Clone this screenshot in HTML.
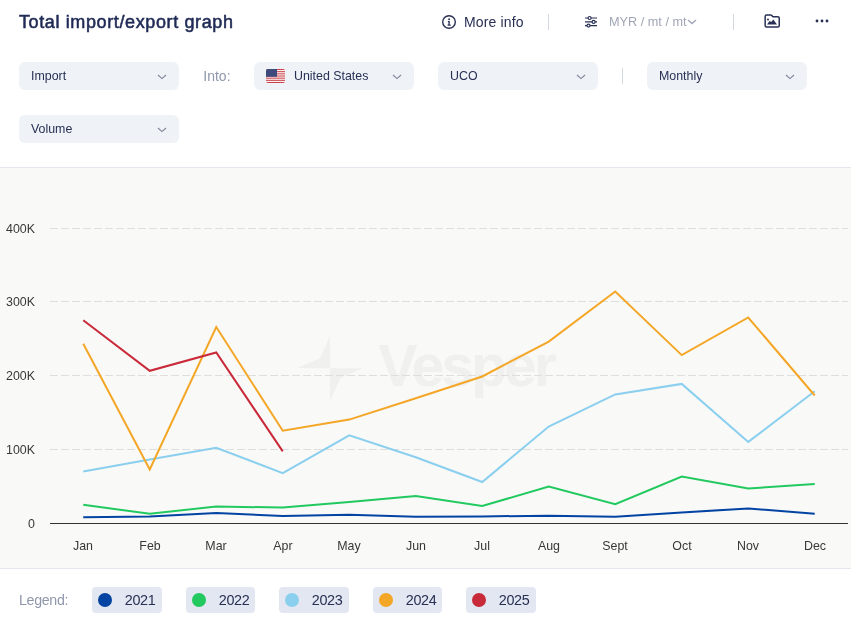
<!DOCTYPE html>
<html><head><meta charset="utf-8">
<style>
*{margin:0;padding:0;box-sizing:border-box}
body{will-change:transform}html,body{width:851px;height:628px;overflow:hidden;background:#fff;font-family:"Liberation Sans",sans-serif}
.a{position:absolute;white-space:nowrap}
.title{left:19px;top:12px;font-size:18px;font-weight:normal;-webkit-text-stroke:0.55px #1f2a55;letter-spacing:0.62px;color:#1f2a55;line-height:20px}
.more{left:464px;top:14px;font-size:14px;letter-spacing:0.15px;color:#283054;line-height:16px}
.sep{position:absolute;width:1px;background:#d3d7e0}
.myr{left:609px;top:15px;font-size:12.7px;color:#a0a6b6;line-height:15px}
.dd{position:absolute;height:28px;width:160px;background:#eff2f7;border-radius:6px}
.dd span{position:absolute;left:12px;top:7px;font-size:12.4px;color:#283054;line-height:15px}
.dd svg{position:absolute;right:12px;top:11.5px}
.into{left:203.3px;top:68px;font-size:14px;color:#8f97ab;line-height:16px}
.chart{position:absolute;left:0;top:167px;width:851px;height:402px;background:#f9f9f8;border-top:1px solid #e5e6ee;border-bottom:1px solid #e5e6ee}
.yl{position:absolute;right:816px;font-size:12.4px;color:#383838;line-height:14px;text-align:right}
.xl{position:absolute;font-size:12.4px;color:#383838;line-height:14px;width:60px;text-align:center}
.leg{left:19px;top:592px;font-size:14.2px;letter-spacing:-0.3px;color:#8f97ab;line-height:16px}
.chip{position:absolute;top:587px;height:26px;background:#e2e7f1;border-radius:4px}
.chip i{position:absolute;left:6px;top:6px;width:14px;height:14px;border-radius:50%}
.chip b{position:absolute;left:32.8px;top:5.2px;font-weight:normal;font-size:14.4px;letter-spacing:-0.35px;color:#283054;line-height:16px}
</style></head><body>
<div class="a title">Total import/export graph</div>

<svg class="a" style="left:441px;top:14px" width="16" height="16" viewBox="0 0 16 16">
<circle cx="8" cy="8" r="6.3" fill="none" stroke="#283054" stroke-width="1.4"/>
<circle cx="8.1" cy="5.3" r="0.95" fill="#283054"/>
<path d="M6.9 7.65H8.1V11.1M6.6 11.1H9.7" stroke="#283054" stroke-width="1.3" fill="none"/>
</svg>
<div class="a more">More info</div>
<div class="sep" style="left:548px;top:14px;height:16px"></div>

<svg class="a" style="left:584px;top:14px" width="14" height="14" viewBox="0 0 14 14">
<g stroke="#283054" stroke-width="1.1" fill="none">
<path d="M1 4h12M1 7.9h12M1 11.6h12"/>
</g>
<g stroke="#283054" stroke-width="1.2" fill="#fff">
<circle cx="5.6" cy="4" r="1.5"/><circle cx="9.6" cy="7.9" r="1.5"/><circle cx="4.5" cy="11.6" r="1.5"/>
</g>
</svg>
<div class="a myr">MYR / mt / mt</div>
<svg class="a" style="left:687.2px;top:19.4px" width="10" height="6" viewBox="0 0 10 6"><path d="M1 1l4 3.6L9 1" stroke="#a0a6b6" stroke-width="1.3" fill="none"/></svg>
<div class="sep" style="left:733px;top:14px;height:16px"></div>

<svg class="a" style="left:763px;top:13px" width="18" height="16" viewBox="0 0 18 16">
<path d="M2.15 3.45q0-1.5 1.5-1.5h3.9q0.8 0 1.3 0.6l0.7 0.9q0.4 0.4 1.1 0.4h4.1q1.5 0 1.5 1.5v7.1q0 1.5-1.5 1.5H3.65q-1.5 0-1.5-1.5z" stroke="#283054" stroke-width="1.5" fill="none"/>
<circle cx="5" cy="6.4" r="1" fill="#283054"/>
<path d="M4.0 11.5L6.5 8.1L8.3 8.9L10.3 6.4L14.0 11.5z" fill="#283054"/>
</svg>
<svg class="a" style="left:814px;top:18px" width="16" height="6" viewBox="0 0 16 6">
<circle cx="3" cy="3" r="1.4" fill="#283054"/><circle cx="8" cy="3" r="1.4" fill="#283054"/><circle cx="13" cy="3" r="1.4" fill="#283054"/>
</svg>

<!-- dropdowns -->
<div class="dd" style="left:19px;top:62px"><span>Import</span><svg width="10" height="6" viewBox="0 0 10 6"><path d="M1 1l4 3.6L9 1" stroke="#80869a" stroke-width="1.15" fill="none"/></svg></div>
<div class="a into">Into:</div>
<div class="dd" style="left:254px;top:62px">
<svg style="position:absolute;left:12px;top:7px" width="19" height="14" viewBox="0 0 19 14">
<defs><clipPath id="fc"><rect x="0" y="0" width="19" height="14" rx="1.8"/></clipPath></defs>
<g clip-path="url(#fc)">
<rect width="19" height="14" fill="#fff"/>
<g fill="#c9434b"><rect y="0" width="19" height="1.08"/><rect y="2.15" width="19" height="1.08"/><rect y="4.3" width="19" height="1.08"/><rect y="6.46" width="19" height="1.08"/><rect y="8.6" width="19" height="1.08"/><rect y="10.77" width="19" height="1.08"/><rect y="12.92" width="19" height="1.08"/></g>
<rect width="11" height="7.8" fill="#3c4a7c"/>
</g></svg>
<span style="left:40px">United States</span><svg width="10" height="6" viewBox="0 0 10 6"><path d="M1 1l4 3.6L9 1" stroke="#80869a" stroke-width="1.15" fill="none"/></svg></div>
<div class="dd" style="left:438px;top:62px"><span>UCO</span><svg width="10" height="6" viewBox="0 0 10 6"><path d="M1 1l4 3.6L9 1" stroke="#80869a" stroke-width="1.15" fill="none"/></svg></div>
<div class="sep" style="left:622px;top:68px;height:16px"></div>
<div class="dd" style="left:647px;top:62px"><span>Monthly</span><svg width="10" height="6" viewBox="0 0 10 6"><path d="M1 1l4 3.6L9 1" stroke="#80869a" stroke-width="1.15" fill="none"/></svg></div>
<div class="dd" style="left:19px;top:115px"><span>Volume</span><svg width="10" height="6" viewBox="0 0 10 6"><path d="M1 1l4 3.6L9 1" stroke="#80869a" stroke-width="1.15" fill="none"/></svg></div>

<!-- chart -->
<div class="chart"></div>
<svg class="a" style="left:0;top:0" width="851" height="628" viewBox="0 0 851 628">
<g fill="#f0f0ef">
<path d="M330 336L330 368.2L297.2 368L320.4 358.1Z"/><path d="M330 368.2L362.8 368.2L340.7 377.8L330 400.4Z"/>
<text x="378.3" y="385.8" font-family="Liberation Sans" font-weight="bold" font-size="59" letter-spacing="-3">Vesper</text>
</g>
<g stroke="#dedede" stroke-width="1" stroke-dasharray="8 3">
<path d="M50 228.5H848M50 301.5H848M50 375.5H848M50 449.5H848"/>
</g>
<path d="M50 523.5H848" stroke="#333" stroke-width="1"/>
<g fill="none" stroke-width="2" stroke-linejoin="miter">
<polyline stroke="#0344a3" points="83.25,517.3 149.75,516.4 216.25,513.0 282.75,516.0 349.25,514.8 415.75,516.7 482.25,516.4 548.75,515.7 615.25,516.8 681.75,512.5 748.25,508.4 814.75,513.8"/>
<polyline stroke="#22c95f" points="83.25,504.8 149.75,513.8 216.25,506.5 282.75,507.6 349.25,501.9 415.75,495.9 482.25,505.9 548.75,486.6 615.25,504.2 681.75,476.6 748.25,488.5 814.75,484.1"/>
<polyline stroke="#8bcfef" points="83.25,471.5 149.75,459.6 216.25,447.7 282.75,473.1 349.25,435.4 415.75,457.2 482.25,482.0 548.75,426.5 615.25,394.4 681.75,383.9 748.25,441.9 814.75,391.2"/>
<polyline stroke="#f4a626" points="83.25,343.7 149.75,469.5 216.25,327.0 282.75,430.7 349.25,419.6 415.75,398.2 482.25,376.5 548.75,341.6 615.25,291.5 681.75,355.1 748.25,317.5 814.75,395.5"/>
<polyline stroke="#c92a39" points="83.25,320.3 149.75,370.8 216.25,352.5 282.75,451.4"/>
</g>
</svg>
<div class="yl" style="top:222px">400K</div>
<div class="yl" style="top:295px">300K</div>
<div class="yl" style="top:369px">200K</div>
<div class="yl" style="top:443px">100K</div>
<div class="yl" style="top:517px">0</div>

<div class="xl" style="left:53px;top:539px">Jan</div>
<div class="xl" style="left:120px;top:539px">Feb</div>
<div class="xl" style="left:186px;top:539px">Mar</div>
<div class="xl" style="left:253px;top:539px">Apr</div>
<div class="xl" style="left:319px;top:539px">May</div>
<div class="xl" style="left:386px;top:539px">Jun</div>
<div class="xl" style="left:452px;top:539px">Jul</div>
<div class="xl" style="left:519px;top:539px">Aug</div>
<div class="xl" style="left:585px;top:539px">Sept</div>
<div class="xl" style="left:652px;top:539px">Oct</div>
<div class="xl" style="left:718px;top:539px">Nov</div>
<div class="xl" style="left:785px;top:539px">Dec</div>

<!-- legend -->
<div class="a leg">Legend:</div>
<div class="chip" style="left:92px;width:70px"><i style="background:#0344a3"></i><b>2021</b></div>
<div class="chip" style="left:186px;width:69px"><i style="background:#22c95f"></i><b>2022</b></div>
<div class="chip" style="left:279px;width:70px"><i style="background:#8bcfef"></i><b>2023</b></div>
<div class="chip" style="left:373px;width:69px"><i style="background:#f4a626"></i><b>2024</b></div>
<div class="chip" style="left:466px;width:70px"><i style="background:#c92a39"></i><b>2025</b></div>
</body></html>
